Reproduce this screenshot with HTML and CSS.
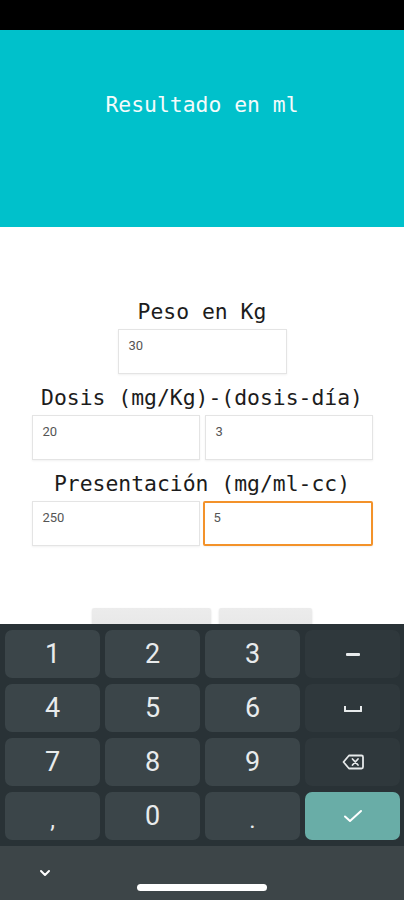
FILE: index.html
```html
<!DOCTYPE html>
<html lang="es">
<head>
<meta charset="utf-8">
<title>Dosis</title>
<link rel="stylesheet" href="styles.css">
</head>
<body>
<div class="status"></div>
<header class="result">
  <h1 class="result-title">Resultado en ml</h1>
</header>
<main class="form">
  <div class="label">Peso en Kg</div>
  <div class="row single">
    <div class="field">30</div>
  </div>
  <div class="label">Dosis (mg/Kg)-(dosis-día)</div>
  <div class="row">
    <div class="field">20</div>
    <div class="field">3</div>
  </div>
  <div class="label">Presentación (mg/ml-cc)</div>
  <div class="row">
    <div class="field">250</div>
    <div class="field focused">5</div>
  </div>
  <div class="actions">
    <button class="btn wide" aria-label="Calcular"></button>
    <button class="btn" aria-label="Borrar"></button>
  </div>
</main>
<div class="keyboard">
  <div class="keys">
    <div class="key">1</div>
    <div class="key">2</div>
    <div class="key">3</div>
    <div class="key fn"><span class="minus"></span></div>
    <div class="key">4</div>
    <div class="key">5</div>
    <div class="key">6</div>
    <div class="key fn"><span class="space"></span></div>
    <div class="key">7</div>
    <div class="key">8</div>
    <div class="key">9</div>
    <div class="key fn">
      <svg width="22" height="16" viewBox="0 0 22 16"><path d="M7 1.5 H19.5 a1.5 1.5 0 0 1 1.5 1.5 V13 a1.5 1.5 0 0 1 -1.5 1.5 H7 L1.5 8 Z" fill="none" stroke="#e6e9ea" stroke-width="1.8" stroke-linejoin="round"/><path d="M10.5 5 L16 11 M16 5 L10.5 11" stroke="#e6e9ea" stroke-width="1.8" stroke-linecap="round"/></svg>
    </div>
    <div class="key small">,</div>
    <div class="key">0</div>
    <div class="key small">.</div>
    <div class="key enter">
      <svg width="20" height="16" viewBox="0 0 20 16"><path d="M2 8.5 L7 13 L18 3" fill="none" stroke="#ffffff" stroke-width="2" stroke-linecap="round" stroke-linejoin="round"/></svg>
    </div>
  </div>
  <div class="navbar">
    <svg class="chev" width="12" height="8" viewBox="0 0 12 8"><path d="M2 2 L6 6 L10 2" fill="none" stroke="#ffffff" stroke-width="2" stroke-linecap="round" stroke-linejoin="round"/></svg>
    <span class="pill"></span>
  </div>
</div>
</body>
</html>
```

FILE: styles.css
```css
* { box-sizing: border-box; }
html, body { margin: 0; padding: 0; }
body {
  width: 404px;
  height: 900px;
  overflow: hidden;
  background: #ffffff;
  font-family: "DejaVu Sans Mono", monospace;
}
.status {
  height: 30px;
  background: #000000;
}
.result {
  height: 197px;
  background: #00c1cb;
  display: flex;
  justify-content: center;
  padding-top: 62px;
}
.result-title {
  margin: 0;
  font-weight: normal;
  font-size: 21.4px;
  line-height: 26px;
  height: 26px;
  color: #f4fbfb;
}
.form {
  display: flex;
  flex-direction: column;
  align-items: center;
  padding-top: 72px;
}
.label {
  font-size: 21.4px;
  line-height: 26px;
  color: #1c1c1c;
  margin-bottom: 4px;
}
.row {
  display: flex;
  gap: 5px;
  margin-bottom: 11px;
}
.field {
  width: 168px;
  height: 45px;
  border: 1px solid #e4e4e4;
  box-shadow: 0 1px 2px rgba(0,0,0,0.06);
  padding: 8px 0 0 10px;
  font-family: Roboto, "Liberation Sans", sans-serif;
  font-size: 13px;
  line-height: 16px;
  color: #555555;
}
.single .field { width: 169px; }
.field.focused {
  border: 2px solid #f3922a;
  border-radius: 2px;
  padding: 7px 0 0 9px;
  width: 170px;
  margin-left: -2px;
}
.actions {
  display: flex;
  gap: 8px;
  margin-top: 51px;
}
.btn {
  height: 44px;
  width: 119px;
  border: none;
  border-radius: 2px;
  background: linear-gradient(#ececec, #e2e2e2);
  box-shadow: 0 1px 2px rgba(0,0,0,0.15);
}
.btn:not(.wide) { width: 93px; }
.keyboard {
  position: fixed;
  left: 0;
  right: 0;
  top: 624px;
  bottom: 0;
  background: #293236;
  display: flex;
  flex-direction: column;
}
.keys {
  display: grid;
  grid-template-columns: repeat(4, 95px);
  grid-auto-rows: 48px;
  column-gap: 5px;
  row-gap: 6px;
  padding: 6px 5px 6px 5px;
}
.key {
  background: #3b4549;
  border-radius: 7px;
  display: flex;
  align-items: center;
  justify-content: center;
  font-family: Roboto, "Liberation Sans", sans-serif;
  font-size: 27px;
  color: #e8ebec;
}
.key.fn { background: #2f383c; }
.key.small { font-size: 24px; padding-top: 8px; }
.key.enter { background: #69ada7; }
.minus {
  width: 14px;
  height: 3px;
  border-radius: 1px;
  background: #e8ebec;
}
.space {
  width: 18px;
  height: 6px;
  border: 2px solid #e8ebec;
  border-top: none;
  border-radius: 0 0 1px 1px;
  margin-top: 2px;
}
.navbar {
  flex: 1;
  background: #3d4548;
  position: relative;
  display: flex;
  align-items: flex-end;
  justify-content: center;
  padding-bottom: 9px;
}
.chev {
  position: absolute;
  left: 39px;
  top: 23px;
}
.pill {
  width: 130px;
  height: 7px;
  border-radius: 4px;
  background: #ffffff;
}
```
